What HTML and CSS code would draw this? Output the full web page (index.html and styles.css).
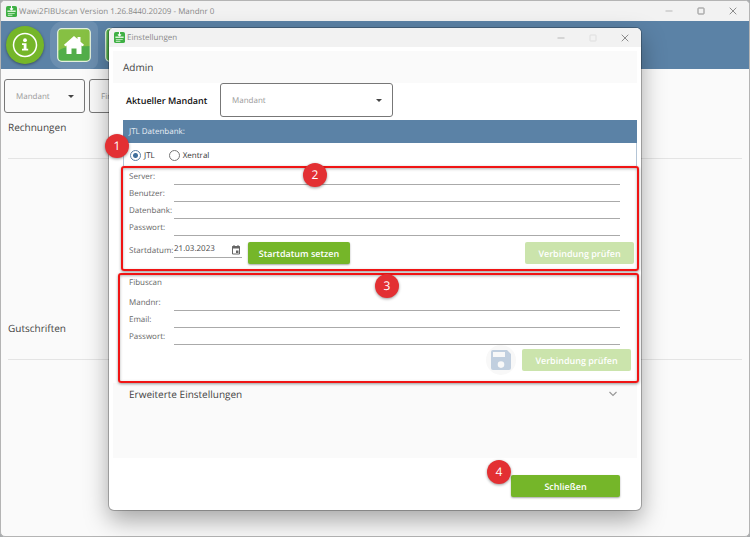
FILE: index.html
```html
<!DOCTYPE html>
<html lang="de">
<head>
  <meta charset="UTF-8">
  <meta name="viewport" content="width=device-width, initial-scale=1.0">
  <title>Wawi2FIBUscan</title>
  <link rel="stylesheet" href="styles.css">
</head>
<body>
  <svg class="symbols" aria-hidden="true">
    <symbol id="logo" viewBox="0 0 12 12">
      <rect width="12" height="12" rx="2" fill="#3fb044"/>
      <path d="M6 0v4M4.300 2.500L6 4.300l1.700-1.800" fill="none" stroke="#fff" stroke-width="1.200"/>
      <path d="M1.500 5h9v1.500h-9zM2 7.500h7.500v1H2zM2 9.500h5v1H2z" fill="#d9f2d5"/>
    </symbol>
    <symbol id="minimize" viewBox="0 0 8 8"><path d="M.5 4h7" fill="none" stroke="currentColor"/></symbol>
    <symbol id="maximize" viewBox="0 0 8 8"><rect x="1" y="1" width="6" height="6" rx=".5" fill="none" stroke="currentColor"/></symbol>
    <symbol id="close" viewBox="0 0 8 8"><path d="M.7.7l6.600 6.600M7.300.7L.7 7.300" fill="none" stroke="currentColor"/></symbol>
  </svg>

  <div class="window">
    <header class="titlebar">
      <svg class="logo"><use href="#logo"/></svg>
      <span class="title">Wawi2FIBUscan Version 1.26.8440.20209 - Mandnr 0</span>
      <button class="win-btn" aria-label="Minimieren"><svg><use href="#minimize"/></svg></button>
      <button class="win-btn dark" aria-label="Maximieren"><svg><use href="#maximize"/></svg></button>
      <button class="win-btn dark" aria-label="Beenden"><svg><use href="#close"/></svg></button>
    </header>

    <nav class="toolbar">
      <button class="info-btn" aria-label="Info">
        <svg viewBox="0 0 38 38">
          <circle cx="19" cy="19" r="11.500" fill="none" stroke="#fff" stroke-width="1.500"/>
          <circle cx="19" cy="14.200" r="1.900" fill="#fff"/>
          <path d="M16 17.300h4.500v5.400h1.700v1.800H16v-1.800h1.700v-3.600H16z" fill="#fff"/>
        </svg>
      </button>
      <button class="nav-btn active" aria-label="Start">
        <svg viewBox="0 0 34 34">
          <rect x=".7" y=".7" width="32.600" height="32.600" rx="4" fill="#86c043"/>
          <path d="M1 23C9 17 20 19 33 18v11a4 4 0 0 1-4 4H5a4 4 0 0 1-4-4z" fill="#52ae4a"/>
          <rect x=".7" y=".7" width="32.600" height="32.600" rx="4" fill="none" stroke="#e3f0dd" stroke-width="1.300"/>
          <path d="M17 8l3.500 3V9h3v4.700l3.500 3-1.200 1.500-1.300-.7V26h-5v-5.500h-5V26h-5v-8.500l-1.300.7L7 16.700z" fill="#fff"/>
        </svg>
      </button>
      <button class="nav-btn" aria-label="Scan">
        <svg viewBox="0 0 34 34">
          <rect x=".7" y=".7" width="32.600" height="32.600" rx="4" fill="#52ae4a" stroke="#e3f0dd" stroke-width="1.300"/>
        </svg>
      </button>
    </nav>

    <main class="content">
      <div class="filters">
        <div class="select-box">
          <select aria-label="Mandant"><option>Mandant</option></select>
        </div>
        <div class="select-box">
          <select aria-label="Firma"><option>Firma</option></select>
        </div>
      </div>
      <section class="list">
        <h2>Rechnungen</h2>
        <hr>
      </section>
      <section class="list">
        <h2>Gutschriften</h2>
        <hr>
      </section>
    </main>
  </div>

  <div class="dialog" role="dialog" aria-label="Einstellungen">
    <header class="titlebar">
      <svg class="logo"><use href="#logo"/></svg>
      <span class="title">Einstellungen</span>
      <button class="win-btn" aria-label="Minimieren"><svg><use href="#minimize"/></svg></button>
      <button class="win-btn" aria-label="Maximieren" disabled><svg><use href="#maximize"/></svg></button>
      <button class="win-btn dark" aria-label="Dialog schließen"><svg><use href="#close"/></svg></button>
    </header>

    <form class="dialog-body">
      <h2 class="admin">Admin</h2>

      <div class="mandant-row">
        <label for="mandant">Aktueller Mandant</label>
        <div class="select-box wide">
          <select id="mandant"><option>Mandant</option></select>
        </div>
      </div>

      <div class="panel">
        <h3>JTL Datenbank:</h3>
        <div class="radios">
          <label><input type="radio" name="system" checked>JTL</label>
          <label><input type="radio" name="system">Xentral</label>
          <span class="step step-1">1</span>
        </div>

        <section class="group db">
          <span class="step step-2">2</span>
          <div class="field"><label for="server">Server:</label><input type="text" id="server"></div>
          <div class="field"><label for="user">Benutzer:</label><input type="text" id="user"></div>
          <div class="field"><label for="database">Datenbank:</label><input type="text" id="database"></div>
          <div class="field"><label for="dbpass">Passwort:</label><input type="password" id="dbpass"></div>
          <div class="date-row">
            <label for="start">Startdatum:</label>
            <div class="date">
              <input type="text" id="start" value="21.03.2023">
              <svg viewBox="0 0 10 10">
                <path d="M1.500 1.500h7v7.500h-7z" fill="none" stroke="#666"/>
                <path d="M1 1.500h8v2H1zM2.500 0h1v2h-1zM6.500 0h1v2h-1zM5 5.500h2.500V8H5z" fill="#666"/>
              </svg>
            </div>
            <button type="button" class="btn set">Startdatum setzen</button>
            <button type="button" class="btn check" disabled>Verbindung prüfen</button>
          </div>
        </section>

        <section class="group fibu">
          <span class="step step-3">3</span>
          <h4>Fibuscan</h4>
          <div class="field"><label for="mandnr">Mandnr:</label><input type="text" id="mandnr"></div>
          <div class="field"><label for="email">Email:</label><input type="email" id="email"></div>
          <div class="field"><label for="fibupass">Passwort:</label><input type="password" id="fibupass"></div>
          <div class="actions">
            <button type="button" class="save" aria-label="Speichern" disabled>
              <svg viewBox="0 0 20 20">
                <path fill-rule="evenodd" d="M2 0h14l4 4v14a2 2 0 0 1-2 2H2a2 2 0 0 1-2-2V2a2 2 0 0 1 2-2zM2 2v5h12V2zM10 11.300a3.300 3.300 0 1 0 0 6.600 3.300 3.300 0 0 0 0-6.600z" fill="#c1cfdf"/>
              </svg>
            </button>
            <button type="button" class="btn check" disabled>Verbindung prüfen</button>
          </div>
        </section>
      </div>

      <details class="advanced">
        <summary>
          Erweiterte Einstellungen
          <svg viewBox="0 0 8 6"><path d="M.5 1L4 4.500 7.500 1" fill="none" stroke="#999" stroke-width="1.200"/></svg>
        </summary>
      </details>

      <footer>
        <span class="step step-4">4</span>
        <button type="button" class="btn check">Schließen</button>
      </footer>
    </form>
  </div>
</body>
</html>
```
FILE: styles.css
```css
* {
  box-sizing: border-box;
}
body {
  margin: 0;
  background-color: #a8abad;
  color: #444;
  font-family: "Open Sans", "Noto Sans", sans-serif;
  font-size: 8px;
  text-rendering: geometricPrecision;
  position: relative;
}
h2, h3, h4 {
  margin: 0;
  font-weight: normal;
}
button, input, select {
  font: inherit;
  color: inherit;
  margin: 0;
  padding: 0;
  border: none;
  background: none;
  text-rendering: inherit;
}
.symbols {
  display: none;
}

/* main window */
.window {
  min-height: 100vh;
  border: 1px solid #b4b4b4;
  border-radius: 5px;
  background-color: #fafafa;
  overflow: hidden;
}
.titlebar {
  display: flex;
  align-items: center;
  height: 20px;
  padding: 0 9px 0 5px;
  background-color: #f2f2f2;
  color: #888;
  font-size: 8px;
}
.titlebar .logo {
  width: 11px;
  height: 11px;
  margin-right: 2px;
}
.title {
  flex: 1;
}
.win-btn {
  display: flex;
  justify-content: center;
  width: 14px;
  margin-left: 18px;
  color: #b8b8b8;
}
.win-btn svg {
  width: 8px;
  height: 8px;
}
.win-btn.dark {
  color: #8c8c8c;
}
.win-btn:disabled {
  color: #dedede;
}
.toolbar {
  display: flex;
  align-items: center;
  height: 48px;
  padding-left: 5px;
  background-color: #5b82a6;
}
.info-btn {
  width: 38px;
  height: 38px;
  margin-right: 6px;
  border-radius: 50%;
  background-color: #75b629;
  box-shadow: 0 1px 3px rgba(0, 0, 0, 0.4);
}
.info-btn svg {
  display: block;
}
.nav-btn {
  display: flex;
  align-items: center;
  justify-content: center;
  width: 48px;
  height: 48px;
  border-radius: 14px 8px 8px 14px;
}
.nav-btn.active {
  background-color: #6c8fb0;
}
.nav-btn svg {
  width: 34px;
  height: 34px;
}
.content {
  padding: 10px 3px 0;
}
.filters {
  display: flex;
  gap: 4px;
}
.select-box {
  position: relative;
  width: 81px;
  height: 34px;
  border: 1px solid #777;
  border-radius: 3px;
  color: #999;
}
.select-box select {
  appearance: none;
  width: 100%;
  height: 100%;
  padding-left: 11px;
}
.select-box::after {
  content: "";
  position: absolute;
  right: 10px;
  top: 15px;
  border: 3px solid transparent;
  border-top-color: #444;
  pointer-events: none;
}
.select-box.wide {
  width: 173px;
}
.list {
  height: 201px;
  padding: 7px 4px 0;
}
.list h2 {
  font-size: 10px;
  line-height: 14px;
}
.list hr {
  margin: 24px 0 0;
  border: none;
  border-top: 1px solid #e4e4e4;
}

/* settings dialog */
.dialog {
  position: absolute;
  top: 28px;
  left: 109px;
  right: 109px;
  border-radius: 5px;
  background-color: #fff;
  box-shadow: 0 0 0 1px rgba(0, 0, 0, 0.25), 0 10px 24px rgba(0, 0, 0, 0.35);
}
.dialog .titlebar {
  height: 19px;
  border-radius: 5px 5px 0 0;
}
.dialog-body {
  padding: 4px 4px 0;
}
.admin {
  height: 32px;
  padding-left: 10px;
  background-color: #fafafa;
  font-size: 10px;
  line-height: 32px;
}
.mandant-row {
  display: flex;
  align-items: center;
  height: 34px;
  margin-bottom: 3px;
  padding-left: 13px;
}
.mandant-row label {
  width: 94px;
  color: #111;
  font-size: 9px;
  font-weight: 600;
  white-space: nowrap;
}
.panel {
  margin-left: 10px;
}
.panel h3 {
  height: 23px;
  padding-left: 6px;
  background-color: #5b82a6;
  color: #e8eef4;
  font-size: 8px;
  line-height: 24px;
}
.radios {
  position: relative;
  display: flex;
  align-items: center;
  gap: 14px;
  height: 23px;
  padding: 2px 6px 0;
  border: solid #b4c5d6;
  border-width: 0 1px;
  color: #333;
}
.radios label {
  display: flex;
  align-items: center;
  gap: 3px;
}
.radios input {
  appearance: none;
  width: 11px;
  height: 11px;
  border: 1px solid #777;
  border-radius: 50%;
}
.radios input:checked {
  border-color: #5b82a6;
  background: radial-gradient(circle, #3f6f9c 2px, transparent 3px);
}
.group {
  position: relative;
  border: 2px solid #f01414;
  border-radius: 3px;
  box-shadow: 0 1px 3px rgba(0, 0, 0, 0.4), inset 0 1px 3px rgba(0, 0, 0, 0.3);
  color: #666;
}
.db {
  margin: 0 -2px;
  padding: 0 3px 5px 6px;
}
.fibu {
  margin: 2px -2px 0 -5px;
  padding: 0 6px 6px 9px;
}
.field {
  display: flex;
  height: 17px;
}
.db .field {
  margin-right: 14px;
}
.fibu .field {
  margin-right: 11px;
}
.field label, .date-row label {
  width: 45px;
  line-height: 17px;
}
.field input {
  flex: 1;
  min-width: 0;
  border-bottom: 1px solid #aaa;
}
.group h4 {
  margin-bottom: 3px;
  font-size: 8px;
  line-height: 16px;
}
.date-row {
  display: flex;
  margin-top: 6px;
}
.date {
  display: flex;
  align-items: center;
  width: 68px;
  height: 16px;
  border-bottom: 1px solid #aaa;
  color: #444;
}
.date input {
  flex: 1;
  min-width: 0;
  height: 14px;
  margin-bottom: 2px;
}
.date svg {
  width: 10px;
  height: 10px;
  margin-right: 1px;
}
.btn {
  height: 22px;
  border-radius: 2px;
  background-color: #75b629;
  box-shadow: 0 1px 2px rgba(0, 0, 0, 0.35);
  color: #fff;
  font-size: 9px;
  font-weight: 600;
  white-space: nowrap;
}
.btn:disabled {
  background-color: #cbe4ac;
  box-shadow: none;
}
.set {
  width: 102px;
  margin: 0 auto 0 6px;
}
.check {
  width: 109px;
}
.actions {
  display: flex;
  align-items: center;
  justify-content: flex-end;
  gap: 6px;
}
.save {
  display: flex;
  align-items: center;
  justify-content: center;
  width: 30px;
  height: 30px;
  border-radius: 50%;
  background-color: #f8f8f8;
}
.save svg {
  width: 20px;
  height: 20px;
}
.advanced {
  height: 75px;
  background-color: #fafafa;
}
.advanced summary {
  display: flex;
  align-items: center;
  justify-content: space-between;
  padding: 3px 20px 0 16px;
  font-size: 10px;
  line-height: 16px;
}
.advanced svg {
  width: 8px;
  height: 6px;
}
footer {
  position: relative;
  display: flex;
  justify-content: flex-end;
  padding: 17px 17px 13px;
}

/* numbered markers */
.step {
  position: absolute;
  z-index: 1;
  width: 24px;
  height: 24px;
  border-radius: 50%;
  background-color: #e33033;
  box-shadow: 0 1px 3px rgba(0, 0, 0, 0.4);
  color: #fff;
  font-size: 12px;
  line-height: 23px;
  text-align: center;
}
.step-1 {
  left: -19px;
  top: -9px;
}
.step-2 {
  left: 180px;
  top: -5px;
}
.step-3 {
  left: 255px;
  top: -1px;
}
.step-4 {
  right: 126px;
  top: 2px;
}
```
